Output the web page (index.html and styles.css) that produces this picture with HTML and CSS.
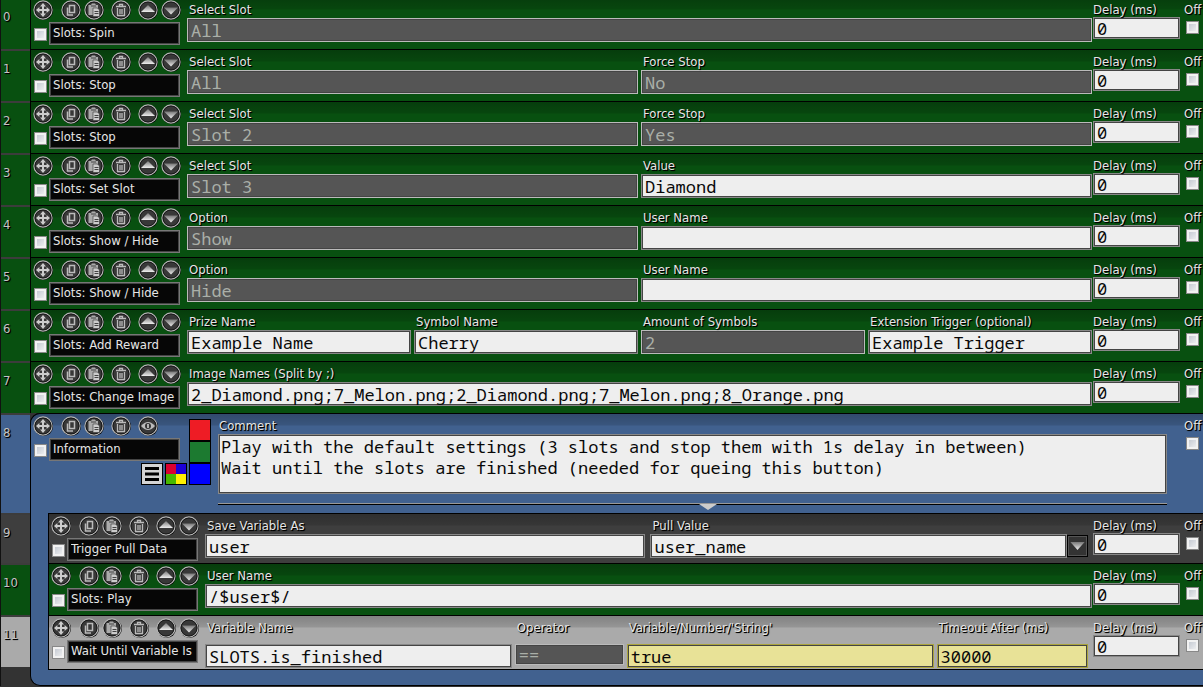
FILE: index.html
```html
<!DOCTYPE html>
<html lang="en">
<head>
<meta charset="utf-8">
<title>Button actions</title>
<link rel="stylesheet" href="styles.css">
</head>
<body>
<svg class="defs" aria-hidden="true">
  <defs>
    <linearGradient id="silver" x1="0" y1="0" x2="0" y2="1"><stop offset="0" stop-color="#777"/><stop offset="1" stop-color="#eee"/></linearGradient>
    <symbol id="disc" viewBox="0 0 20 20"><circle cx="10.5" cy="10.5" r="9.5" fill="#000"/><circle cx="10" cy="10" r="9" fill="#383838" stroke="#b4b4b4" stroke-width="1.300"/><circle cx="10" cy="10" r="8" fill="none" stroke="#191919"/></symbol>
    <symbol id="move" viewBox="0 0 20 20"><use href="#disc"/><path d="M10 3l3 3.400h-2V9h2.600V7l3.400 3-3.400 3v-2H11v2.600h2L10 17l-3-3.400h2V11H6.400v2L3 10l3.400-3v2H9V6.400H7z" fill="#ccc"/></symbol>
    <symbol id="copy" viewBox="0 0 20 20"><use href="#disc"/><path d="M8.500 5.500h5v7h-5zM6.500 7.500v7.500h5.500" fill="none" stroke="#bbb" stroke-width="1.500"/></symbol>
    <symbol id="paste" viewBox="0 0 20 20"><use href="#disc"/><path d="M4.500 5h2.500l1-1.500h3L12 5h2v3h-4v7H4.500z" fill="#aaa"/><path d="M7 6h5" stroke="#444"/><path d="M9 8h4.500l2 2v6.500H9z" fill="#ccc" stroke="#333" stroke-width=".6"/><path d="M10.500 11.500h4M10.500 13.500h4" stroke="#444"/></symbol>
    <symbol id="trash" viewBox="0 0 20 20"><use href="#disc"/><path d="M5 6.500h10M8.500 6V4.500h3V6M6.500 8v7.500h7V8M9 9v5M11 9v5" fill="none" stroke="#bbb" stroke-width="1.300"/></symbol>
    <symbol id="up" viewBox="0 0 20 20"><use href="#disc"/><path d="M10 5l7 7H3z" fill="url(#silver)"/></symbol>
    <symbol id="down" viewBox="0 0 20 20"><use href="#disc"/><path d="M10 14.500L3 7.500h14z" fill="url(#silver)"/></symbol>
    <symbol id="eye" viewBox="0 0 20 20"><use href="#disc"/><path d="M3 10q7-8 14 0-7 8-14 0z" fill="#bbb"/><circle cx="10" cy="10" r="3" fill="#333"/><path d="M10 8v4" stroke="#ddd" stroke-width="1.500"/></symbol>
  </defs>
</svg>
<main class="list">
  <div class="line green">
    <div class="num">0</div>
    <div class="row">
      <div class="tools">
        <div class="icons"><button aria-label="Move"><svg><use href="#move"/></svg></button><button aria-label="Copy"><svg><use href="#copy"/></svg></button><button aria-label="Paste"><svg><use href="#paste"/></svg></button><button aria-label="Delete"><svg><use href="#trash"/></svg></button><button aria-label="Up"><svg><use href="#up"/></svg></button><button aria-label="Down"><svg><use href="#down"/></svg></button></div>
        <div class="title"><input type="checkbox" aria-label="Select action 0"><input class="name" aria-label="Action 0" readonly value="Slots: Spin"></div>
      </div>
      <div class="fields"><label class="field">Select Slot<input class="box off" readonly value="All"></label></div>
      <label class="delay">Delay (ms)<input class="box" value="0"></label>
      <label class="toggle">Off<input type="checkbox"></label>
    </div>
  </div>
  <div class="line green">
    <div class="num">1</div>
    <div class="row">
      <div class="tools">
        <div class="icons"><button aria-label="Move"><svg><use href="#move"/></svg></button><button aria-label="Copy"><svg><use href="#copy"/></svg></button><button aria-label="Paste"><svg><use href="#paste"/></svg></button><button aria-label="Delete"><svg><use href="#trash"/></svg></button><button aria-label="Up"><svg><use href="#up"/></svg></button><button aria-label="Down"><svg><use href="#down"/></svg></button></div>
        <div class="title"><input type="checkbox" aria-label="Select action 1"><input class="name" aria-label="Action 1" readonly value="Slots: Stop"></div>
      </div>
      <div class="fields"><label class="field">Select Slot<input class="box off" readonly value="All"></label><label class="field">Force Stop<input class="box off" readonly value="No"></label></div>
      <label class="delay">Delay (ms)<input class="box" value="0"></label>
      <label class="toggle">Off<input type="checkbox"></label>
    </div>
  </div>
  <div class="line green">
    <div class="num">2</div>
    <div class="row">
      <div class="tools">
        <div class="icons"><button aria-label="Move"><svg><use href="#move"/></svg></button><button aria-label="Copy"><svg><use href="#copy"/></svg></button><button aria-label="Paste"><svg><use href="#paste"/></svg></button><button aria-label="Delete"><svg><use href="#trash"/></svg></button><button aria-label="Up"><svg><use href="#up"/></svg></button><button aria-label="Down"><svg><use href="#down"/></svg></button></div>
        <div class="title"><input type="checkbox" aria-label="Select action 2"><input class="name" aria-label="Action 2" readonly value="Slots: Stop"></div>
      </div>
      <div class="fields"><label class="field">Select Slot<input class="box off" readonly value="Slot 2"></label><label class="field">Force Stop<input class="box off" readonly value="Yes"></label></div>
      <label class="delay">Delay (ms)<input class="box" value="0"></label>
      <label class="toggle">Off<input type="checkbox"></label>
    </div>
  </div>
  <div class="line green">
    <div class="num">3</div>
    <div class="row">
      <div class="tools">
        <div class="icons"><button aria-label="Move"><svg><use href="#move"/></svg></button><button aria-label="Copy"><svg><use href="#copy"/></svg></button><button aria-label="Paste"><svg><use href="#paste"/></svg></button><button aria-label="Delete"><svg><use href="#trash"/></svg></button><button aria-label="Up"><svg><use href="#up"/></svg></button><button aria-label="Down"><svg><use href="#down"/></svg></button></div>
        <div class="title"><input type="checkbox" aria-label="Select action 3"><input class="name" aria-label="Action 3" readonly value="Slots: Set Slot"></div>
      </div>
      <div class="fields"><label class="field">Select Slot<input class="box off" readonly value="Slot 3"></label><label class="field">Value<input class="box" value="Diamond"></label></div>
      <label class="delay">Delay (ms)<input class="box" value="0"></label>
      <label class="toggle">Off<input type="checkbox"></label>
    </div>
  </div>
  <div class="line green">
    <div class="num">4</div>
    <div class="row">
      <div class="tools">
        <div class="icons"><button aria-label="Move"><svg><use href="#move"/></svg></button><button aria-label="Copy"><svg><use href="#copy"/></svg></button><button aria-label="Paste"><svg><use href="#paste"/></svg></button><button aria-label="Delete"><svg><use href="#trash"/></svg></button><button aria-label="Up"><svg><use href="#up"/></svg></button><button aria-label="Down"><svg><use href="#down"/></svg></button></div>
        <div class="title"><input type="checkbox" aria-label="Select action 4"><input class="name" aria-label="Action 4" readonly value="Slots: Show / Hide"></div>
      </div>
      <div class="fields"><label class="field">Option<input class="box off" readonly value="Show"></label><label class="field">User Name<input class="box"></label></div>
      <label class="delay">Delay (ms)<input class="box" value="0"></label>
      <label class="toggle">Off<input type="checkbox"></label>
    </div>
  </div>
  <div class="line green">
    <div class="num">5</div>
    <div class="row">
      <div class="tools">
        <div class="icons"><button aria-label="Move"><svg><use href="#move"/></svg></button><button aria-label="Copy"><svg><use href="#copy"/></svg></button><button aria-label="Paste"><svg><use href="#paste"/></svg></button><button aria-label="Delete"><svg><use href="#trash"/></svg></button><button aria-label="Up"><svg><use href="#up"/></svg></button><button aria-label="Down"><svg><use href="#down"/></svg></button></div>
        <div class="title"><input type="checkbox" aria-label="Select action 5"><input class="name" aria-label="Action 5" readonly value="Slots: Show / Hide"></div>
      </div>
      <div class="fields"><label class="field">Option<input class="box off" readonly value="Hide"></label><label class="field">User Name<input class="box"></label></div>
      <label class="delay">Delay (ms)<input class="box" value="0"></label>
      <label class="toggle">Off<input type="checkbox"></label>
    </div>
  </div>
  <div class="line green">
    <div class="num">6</div>
    <div class="row">
      <div class="tools">
        <div class="icons"><button aria-label="Move"><svg><use href="#move"/></svg></button><button aria-label="Copy"><svg><use href="#copy"/></svg></button><button aria-label="Paste"><svg><use href="#paste"/></svg></button><button aria-label="Delete"><svg><use href="#trash"/></svg></button><button aria-label="Up"><svg><use href="#up"/></svg></button><button aria-label="Down"><svg><use href="#down"/></svg></button></div>
        <div class="title"><input type="checkbox" aria-label="Select action 6"><input class="name" aria-label="Action 6" readonly value="Slots: Add Reward"></div>
      </div>
      <div class="fields"><label class="field">Prize Name<input class="box" value="Example Name"></label><label class="field">Symbol Name<input class="box" value="Cherry"></label><label class="field">Amount of Symbols<input class="box off" readonly value="2"></label><label class="field">Extension Trigger (optional)<input class="box" value="Example Trigger"></label></div>
      <label class="delay">Delay (ms)<input class="box" value="0"></label>
      <label class="toggle">Off<input type="checkbox"></label>
    </div>
  </div>
  <div class="line green">
    <div class="num">7</div>
    <div class="row">
      <div class="tools">
        <div class="icons"><button aria-label="Move"><svg><use href="#move"/></svg></button><button aria-label="Copy"><svg><use href="#copy"/></svg></button><button aria-label="Paste"><svg><use href="#paste"/></svg></button><button aria-label="Delete"><svg><use href="#trash"/></svg></button><button aria-label="Up"><svg><use href="#up"/></svg></button><button aria-label="Down"><svg><use href="#down"/></svg></button></div>
        <div class="title"><input type="checkbox" aria-label="Select action 7"><input class="name" aria-label="Action 7" readonly value="Slots: Change Image Amount"></div>
      </div>
      <div class="fields"><label class="field">Image Names (Split by ;)<input class="box" value="2_Diamond.png;7_Melon.png;2_Diamond.png;7_Melon.png;8_Orange.png"></label></div>
      <label class="delay">Delay (ms)<input class="box" value="0"></label>
      <label class="toggle">Off<input type="checkbox"></label>
    </div>
  </div>
  <section class="group">
    <div class="line blue">
      <div class="num">8</div>
      <div class="row info">
        <div class="tools">
          <div class="icons"><button aria-label="Move"><svg><use href="#move"/></svg></button><button aria-label="Copy"><svg><use href="#copy"/></svg></button><button aria-label="Paste"><svg><use href="#paste"/></svg></button><button aria-label="Delete"><svg><use href="#trash"/></svg></button><button aria-label="Show"><svg><use href="#eye"/></svg></button></div>
          <div class="title"><input type="checkbox" aria-label="Select action 8"><input class="name" aria-label="Action 8" readonly value="Information"></div>
          <div class="modes"><button class="swatch menu" aria-label="Menu"><svg viewBox="0 0 20 20"><path d="M3 4.500h14M3 10h14M3 15.500h14" stroke="#000" stroke-width="3"/></svg></button><button class="swatch quad" aria-label="Palette"></button></div>
        </div>
        <div class="swatches"><button class="swatch red" aria-label="Red"></button><button class="swatch leaf" aria-label="Green"></button><button class="swatch navy" aria-label="Blue"></button></div>
        <div class="comment">
          <label class="field">Comment<textarea class="box" rows="2">Play with the default settings (3 slots and stop them with 1s delay in between)
Wait until the slots are finished (needed for queing this button)</textarea></label>
          <div class="fold"><svg viewBox="0 0 18 6"><path d="M0 0h18L9 6z" fill="#ccc"/></svg></div>
        </div>
        <label class="toggle">Off<input type="checkbox"></label>
      </div>
    </div>
    <div class="line dark nested">
      <div class="num">9</div>
      <div class="row">
        <div class="tools">
          <div class="icons"><button aria-label="Move"><svg><use href="#move"/></svg></button><button aria-label="Copy"><svg><use href="#copy"/></svg></button><button aria-label="Paste"><svg><use href="#paste"/></svg></button><button aria-label="Delete"><svg><use href="#trash"/></svg></button><button aria-label="Up"><svg><use href="#up"/></svg></button><button aria-label="Down"><svg><use href="#down"/></svg></button></div>
          <div class="title"><input type="checkbox" aria-label="Select action 9"><input class="name" aria-label="Action 9" readonly value="Trigger Pull Data"></div>
        </div>
        <div class="fields pull"><label class="field">Save Variable As<input class="box" value="user"></label><div class="field"><label for="pull">Pull Value</label><div class="combo"><input class="box" id="pull" value="user_name"><button class="drop" aria-label="Open list"><svg viewBox="0 0 16 9"><path d="M0 0h16L8 9z" fill="url(#silver)"/></svg></button></div></div></div>
        <label class="delay">Delay (ms)<input class="box" value="0"></label>
        <label class="toggle">Off<input type="checkbox"></label>
      </div>
    </div>
    <div class="line green nested">
      <div class="num">10</div>
      <div class="row">
        <div class="tools">
          <div class="icons"><button aria-label="Move"><svg><use href="#move"/></svg></button><button aria-label="Copy"><svg><use href="#copy"/></svg></button><button aria-label="Paste"><svg><use href="#paste"/></svg></button><button aria-label="Delete"><svg><use href="#trash"/></svg></button><button aria-label="Up"><svg><use href="#up"/></svg></button><button aria-label="Down"><svg><use href="#down"/></svg></button></div>
          <div class="title"><input type="checkbox" aria-label="Select action 10"><input class="name" aria-label="Action 10" readonly value="Slots: Play"></div>
        </div>
        <div class="fields"><label class="field">User Name<input class="box" value="/$user$/"></label></div>
        <label class="delay">Delay (ms)<input class="box" value="0"></label>
        <label class="toggle">Off<input type="checkbox"></label>
      </div>
    </div>
    <div class="line silver nested">
      <div class="num">11</div>
      <div class="row">
        <div class="tools">
          <div class="icons"><button aria-label="Move"><svg><use href="#move"/></svg></button><button aria-label="Copy"><svg><use href="#copy"/></svg></button><button aria-label="Paste"><svg><use href="#paste"/></svg></button><button aria-label="Delete"><svg><use href="#trash"/></svg></button><button aria-label="Up"><svg><use href="#up"/></svg></button><button aria-label="Down"><svg><use href="#down"/></svg></button></div>
          <div class="title"><input type="checkbox" aria-label="Select action 11"><input class="name" aria-label="Action 11" readonly value="Wait Until Variable Is"></div>
        </div>
        <div class="fields wait"><label class="field">Variable Name<input class="box" value="SLOTS.is_finished"></label><label class="field">Operator<input class="box off" readonly value="=="></label><label class="field">Variable/Number/'String'<input class="box yellow" value="true"></label><label class="field">Timeout After (ms)<input class="box yellow" value="30000"></label></div>
        <label class="delay">Delay (ms)<input class="box" value="0"></label>
        <label class="toggle">Off<input type="checkbox"></label>
      </div>
    </div>
  </section>
</main>
</body>
</html>
```
FILE: styles.css
```css
* { box-sizing: border-box; }
body { margin: 0; background: #333; color: #e6e6e6; font: 13px/16px "DejaVu Sans Condensed", "DejaVu Sans", sans-serif; overflow: hidden; }
button { padding: 0; border: 0; background: none; display: block; }
svg { display: block; width: 100%; height: 100%; }
.defs { position: absolute; width: 0; height: 0; }
.list { margin-top: -3px; border-left: 1px solid #111; text-shadow: 1px 1px 1px #000, 1px 1px 0 #000; }

.line { display: grid; grid-template-columns: 29px minmax(0, 1fr); }
.num { padding: 10px 0 0 2px; border-top: 2px solid #3c3c3c; background: var(--base); color: #c4c4c4; }
.row { display: flex; min-height: 52px; border-top: 1px solid #000; border-left: 1px solid #000; background: linear-gradient(rgba(0, 0, 0, .24), rgba(0, 0, 0, .12) 11px, transparent 12px) var(--base); }
.green { --base: #085010; }
.blue { --base: #41618f; }
.dark { --base: #3e3e3e; }
.silver { --base: #aaa; }

.tools { flex: none; width: 156px; padding: 2px 7px 0 2px; }
.icons { display: flex; margin-bottom: 2px; }
.icons button { flex: none; width: 20px; height: 20px; margin-right: 7px; }
.icons button:first-child { margin-right: 8px; }
.icons button:nth-child(2), .icons button:nth-child(5) { margin-right: 3px; }
.icons button:last-child { margin-right: 0; }
.title { display: flex; gap: 2px; align-items: flex-end; }
.title input[type="checkbox"] { margin: 0 0 4px 1px; }
input[type="checkbox"] { appearance: none; flex: none; width: 13px; height: 13px; margin: 0; border: 1px solid #888; background: linear-gradient(135deg, #bcc2cc, #f6f6f6); box-shadow: inset 0 0 0 2px #f2f2f2; }
.name { flex: 1; min-width: 0; height: 23px; padding: 0 2px 2px; border: 1px solid #777; box-shadow: inset 0 0 0 1px #444; background: #060606; color: #e6e6e6; font: inherit; padding-left: 3px; }

.fields { flex: 1; min-width: 0; display: flex; gap: 3px; }
.field { flex: 1 1 0; min-width: 0; display: block; padding: 4px 0 0 2px; }
.box { display: block; width: 100%; height: 24px; padding: 0 3px; border: 1px solid #888; border-radius: 0; box-shadow: inset 0 0 0 1px #444; background: #eee; color: #080808; font: 17px/21px "Noto Sans Mono", "DejaVu Sans Mono", monospace; }
.field .box { margin-left: -2px; width: calc(100% + 2px); }
.off { background: #555; border-color: #bbb; color: #aaafa8; }
.yellow { background: #e8e297; border-color: #aaa43c; }
.delay { flex: none; width: 88px; margin-left: 1px; padding: 4px 1px 0 0; }
.delay .box { height: 22px; margin-top: -1px; padding-top: 1px; }
.toggle { flex: none; width: 22px; padding: 4px 0 0 3px; white-space: nowrap; }
.toggle input { display: block; margin: 3px 0 0 2px; }

.group { position: relative; padding-bottom: 16px; }
.group::before { content: ""; position: absolute; z-index: -1; inset: 0 0 0 29px; border: 1px solid #000; border-right: 0; border-radius: 10px 0 0 10px; background: #41618f; }
.info { min-height: 100px; border-radius: 10px 0 0; }
.modes { display: flex; justify-content: flex-end; gap: 2px; margin: 2px -7px 0 0; }
.swatch { width: 22px; height: 22px; border: 1px solid #000; }
.menu { background: #d4d4d4; }
.quad { background: conic-gradient(#1c00d8 25%, #fff000 0 50%, #48b800 0 75%, #dc0030 0); }
.swatches { flex: none; width: 31px; padding: 5px 0 0 2px; }
.red { background: #ee1c25; }
.leaf { background: #1c7a30; }
.navy { background: #00f; }
.comment { flex: 1; min-width: 0; margin-right: 14px; }
.comment .field { padding-left: 1px; }
.comment .field .box { margin-left: -1px; width: calc(100% + 1px); }
textarea.box { height: 60px; padding: 1px 2px; resize: none; overflow: hidden; }
.fold { height: 2px; margin-top: 9px; padding-left: 31px; border-top: 1px solid #999; border-bottom: 1px solid #000; }
.fold svg { width: 18px; height: 6px; margin: 0 auto; position: relative; }

.nested .row { margin-left: 18px; }
.dark .row { min-height: 50px; }
.pull { gap: 5px; margin-right: 4px; }
.pull .field:first-child { flex-grow: 441; }
.pull .field:last-child { flex-grow: 438; }
.combo { display: flex; }
.drop { flex: none; width: 21px; height: 22px; padding: 6px 2px; margin-top: 1px; border: 1px solid #000; background: #333; box-shadow: inset 0 0 0 1px #555; }
.silver .num { height: 52px; }
.silver .row { min-height: 55px; border-bottom: 1px solid #000; }
.wait { margin-right: 4px; }
.wait .box { margin-top: 8px; }
.wait .field:nth-child(1) { flex-grow: 308; }
.wait .field:nth-child(2) { flex-grow: 108; }
.wait .field:nth-child(3) { flex-grow: 308; }
.wait .field:nth-child(4) { flex-grow: 151; }
.wait .off { height: 21px; }
```
